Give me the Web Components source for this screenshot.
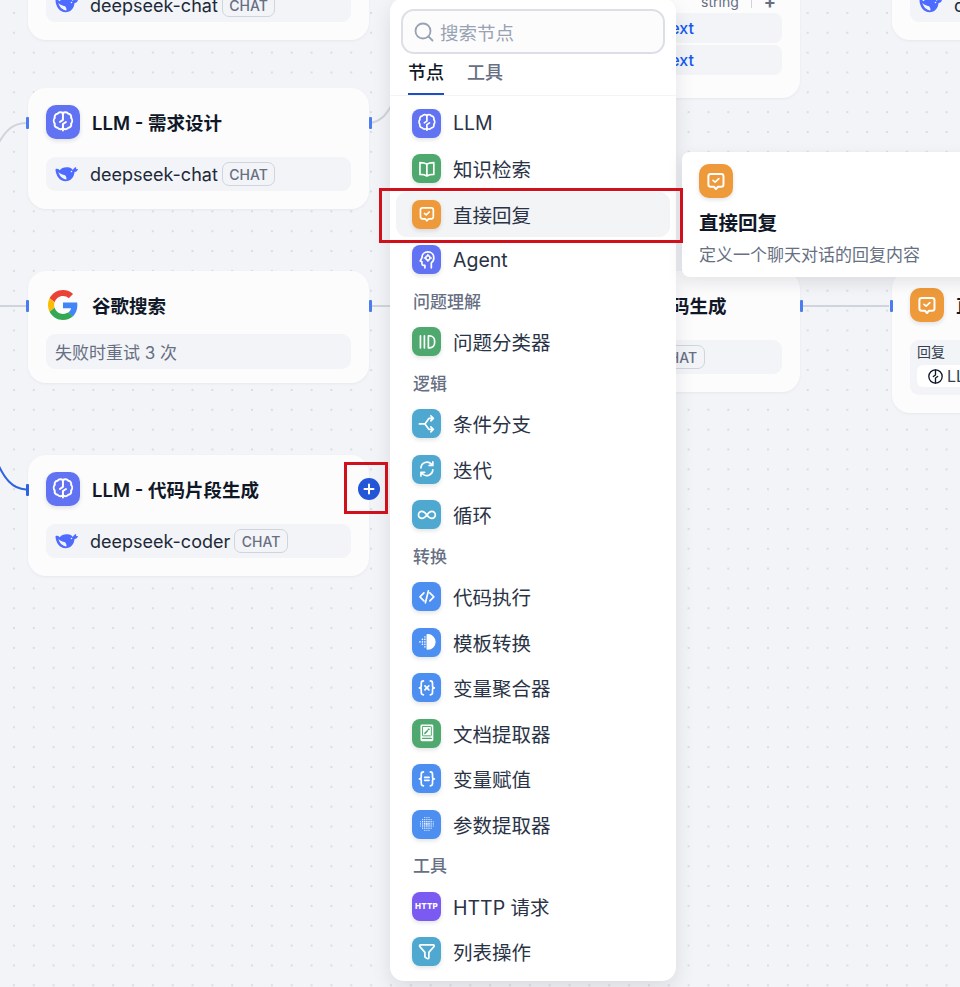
<!DOCTYPE html>
<html lang="zh">
<head>
<meta charset="utf-8">
<title>工作流</title>
<style>
    html, body { margin: 0; height: 100%; }
    body { font-family: Inter, "Noto Sans CJK SC", sans-serif; overflow: hidden; }
</style>
</head>
<body>
<flow-canvas>
    <!-- nodes that lie under the menu or run off the edge -->
    <flow-node x="28" y="-81" handles="left right">
        <node-icon slot="icon" name="llm"></node-icon>
        <span slot="title">LLM - 需求分析</span>
        <model-row name="deepseek-chat"></model-row>
    </flow-node>
    <flow-node x="892" y="-81">
        <node-icon slot="icon" name="llm"></node-icon>
        <span slot="title">LLM</span>
        <model-row name="deepseek-chat"></model-row>
    </flow-node>
    <flow-node x="459" y="-78" bottom="23">
        <node-icon slot="icon" name="llm"></node-icon>
        <span slot="title">变量聚合器</span>
        <var-head></var-head>
        <var-row>text</var-row>
        <var-row>text</var-row>
    </flow-node>

    <flow-node x="28" y="88" handles="left right">
        <node-icon slot="icon" name="llm"></node-icon>
        <span slot="title">LLM - 需求设计</span>
        <model-row name="deepseek-chat"></model-row>
    </flow-node>
    <flow-node x="28" y="271" gap="12" bottom="14" handles="left right">
        <node-icon slot="icon" name="google" plain></node-icon>
        <span slot="title">谷歌搜索</span>
        <retry-row>失败时重试 3 次</retry-row>
    </flow-node>
    <flow-node x="28" y="455" handles="active">
        <node-icon slot="icon" name="llm"></node-icon>
        <span slot="title">LLM - 代码片段生成</span>
        <model-row name="deepseek-coder"></model-row>
    </flow-node>
    <flow-node x="459" y="271" handles="right">
        <node-icon slot="icon" name="llm"></node-icon>
        <span slot="title" style="margin-left:148px">码生成</span>
        <model-row tag-only></model-row>
    </flow-node>
    <flow-node x="892" y="271" handles="left">
        <node-icon slot="icon" name="answer"></node-icon>
        <span slot="title">直接回复</span>
        <answer-row></answer-row>
    </flow-node>

    <add-button></add-button>
    <add-menu></add-menu>
    <node-tip></node-tip>
    <red-mark x="379" y="188" w="304" h="55"></red-mark>
    <red-mark x="344" y="462" w="44" h="52"></red-mark>
</flow-canvas>

<script>
// white strokes in a 24 box, one entry per node type
const paramDots = () => {
    let out = '';
    for (let r = 0; r < 7; r++) {
        for (let c = 0; c < 7; c++) {
            const dx = c - 3, dy = r - 3;
            const d = Math.hypot(dx, dy);
            if (d > 3.4) continue;
            out += `<circle cx="${12 + dx * 2.15}" cy="${12 + dy * 2.15}" r="${0.95 - d * 0.12}" fill="#fff" stroke="none"/>`;
        }
    }
    return out;
};
const templateDots = () => {
    let out = '';
    [[10, 7], [10, 9.5], [10, 12], [10, 14.5], [10, 17], [7.5, 9.5], [7.5, 12], [7.5, 14.5], [5, 12]].forEach(p => {
        out += `<circle cx="${p[0]}" cy="${p[1]}" r=".8" fill="#fff" stroke="none"/>`;
    });
    return out;
};
const ICONS = {
    llm: `<path d="M12 4.600c-1-1.200-3.600-1.200-4.600.4-1.900.2-3 2-2.400 3.500-1.200 1.300-1.200 3.700 0 5-.6 1.700.5 3.400 2.400 3.500 1 1.600 3.600 1.600 4.600.4 1 1.200 3.600 1.200 4.600-.4 1.900-.1 3-1.800 2.400-3.500 1.200-1.300 1.200-3.700 0-5 .6-1.500-.5-3.300-2.400-3.500-1-1.600-3.600-1.600-4.600-.4Z"/><path d="M12 4.600v5.600l-2.600 1.800M12 19.400v-5.600l2.600-1.800"/>`,
    book: `<path d="M12 7.200C10.500 6.200 8.500 5.600 5 5.600v12c3.500 0 5.500.6 7 1.600 1.500-1 3.500-1.600 7-1.600v-12c-3.500 0-5.500.6-7 1.600Zm0 0v12"/>`,
    answer: `<path d="M7.500 6h9a2 2 0 0 1 2 2v7a2 2 0 0 1-2 2h-2.800L12 19l-1.700-2H7.500a2 2 0 0 1-2-2V8a2 2 0 0 1 2-2Z"/><path d="M9.500 11.500l1.800 1.500 3.200-3" stroke-width="1.500"/>`,
    agent: `<path d="M10 20v-2.500H8.500A1.500 1.500 0 0 1 7 16v-2.200L5.300 13 7 10c0-3.500 2.500-6 6-6s6 2.500 6 6c0 2.500-1 4-2.500 5v5"/><circle cx="13" cy="10" r="2.100" stroke-width="1.500"/><path d="M13 6.500v1.400M13 12.100v1.400M9.500 10h1.400M15.100 10h1.400" stroke-width="1.500"/>`,
    classify: `<path d="M5.500 6v12M9.500 6v12M13.500 6h1.300a5 5 0 0 1 5 5v2a5 5 0 0 1-5 5h-1.300Z"/>`,
    branch: `<path d="M4.500 12H10l4-5.500h4.500M10 12l4 5.500h4.500M16 4l2.500 2.500L16 9M16 15l2.500 2.500L16 20"/>`,
    iterate: `<path d="M6 11a6.200 6.200 0 0 1 10.600-3.900L18 8.500M18 4.800v3.700h-3.700M18 13a6.200 6.200 0 0 1-10.600 3.900L6 15.500M6 19.200v-3.700h3.700"/>`,
    loop: `<path d="M12 12c-1.500-2-3-3.500-5-3.500a3.500 3.500 0 0 0 0 7c2 0 3.500-1.500 5-3.500Zm0 0c1.500-2 3-3.500 5-3.500a3.500 3.500 0 0 1 0 7c-2 0-3.500-1.500-5-3.500Z"/>`,
    code: `<path d="M9 8l-4 4 4 4M15 8l4 4-4 4M13.500 6l-3 12"/>`,
    template: `<path d="M12.500 5h.5a7 7 0 0 1 0 14h-.5Z" fill="#fff"/>` + templateDots(),
    aggregate: `<path d="M8.500 5C6.800 5 6.300 6 6.300 7.500V10c0 1-.5 2-1.800 2 1.300 0 1.800 1 1.800 2v2.500C6.300 18 6.800 19 8.500 19M15.500 5c1.700 0 2.200 1 2.200 2.500V10c0 1 .5 2 1.800 2-1.300 0-1.800 1-1.800 2v2.500c0 1.500-.5 2.500-2.200 2.500M10 10l4 4M14 10l-4 4"/>`,
    doc: `<rect x="5.500" y="3.500" width="13" height="17" rx="1.500" fill="#fff" stroke="none"/><rect x="7.500" y="5.500" width="9" height="9.500" rx=".6" fill="none" stroke="#4fa96f" stroke-width="1"/><path d="M10 12.500l2.500-2.500M13.500 8.500h.6" stroke="#4fa96f" stroke-width="1.600"/><path d="M7.500 17.500h9" stroke="#4fa96f" stroke-width="1.200"/>`,
    assign: `<path d="M8.500 5C6.800 5 6.300 6 6.300 7.500V10c0 1-.5 2-1.800 2 1.300 0 1.800 1 1.800 2v2.500C6.300 18 6.800 19 8.500 19M15.500 5c1.700 0 2.200 1 2.200 2.500V10c0 1 .5 2 1.800 2-1.300 0-1.800 1-1.800 2v2.500c0 1.500-.5 2.500-2.200 2.500M9.800 10.500h4.400M9.800 13.500h4.400"/>`,
    param: paramDots(),
    filter: `<path d="M5.500 5h13c.8 0 1.200.9.700 1.500L14 12.500V18c0 .7-.8 1.200-1.400.8l-2-1.200c-.4-.2-.6-.6-.6-1v-4.100L4.800 6.500C4.300 5.900 4.700 5 5.500 5Z"/>`
};
const GOOGLE = `<svg viewBox="0 0 48 48" width="30" height="30"><path fill="#EA4335" d="M24 9.500c3.540 0 6.710 1.220 9.210 3.600l6.850-6.850C35.900 2.380 30.470 0 24 0 14.620 0 6.510 5.380 2.560 13.220l7.980 6.190C12.430 13.720 17.740 9.500 24 9.500z"/><path fill="#4285F4" d="M46.980 24.550c0-1.570-.15-3.090-.38-4.550H24v9.020h12.940c-.58 2.960-2.260 5.480-4.780 7.180l7.730 6c4.510-4.180 7.090-10.360 7.090-17.650z"/><path fill="#FBBC05" d="M10.530 28.590c-.48-1.450-.76-2.990-.76-4.590s.27-3.140.76-4.590l-7.980-6.190C.92 16.460 0 20.120 0 24c0 3.880.92 7.540 2.560 10.780l7.970-6.190z"/><path fill="#34A853" d="M24 48c6.480 0 11.930-2.130 15.890-5.810l-7.730-6c-2.150 1.450-4.920 2.300-8.160 2.300-6.260 0-11.570-4.220-13.470-9.910l-7.980 6.190C6.510 42.620 14.620 48 24 48z"/></svg>`;
const WHALE = `<svg viewBox="0 0 24 16" width="23" height="16"><path fill="#4d6bfe" d="M.5 3C2 2.200 3.500 2.800 5 4 6.500 1.800 10 .5 13.500 1c2 .3 3.800 1.200 5.200 2.700.5-1.300 1.500-2.300 3.300-3 .1 1-.1 1.600.2 2.300.7-.3 1.200-.3 1.800-.2-.5 1.800-1.800 3-3.700 3.400-.3 5.200-3.900 9.300-9.300 9.300C5 15.500.8 9.800.5 3Z"/><path fill="#f2f4f7" d="M3.500 6c1.800 1.800 4.200 3 7 3.200 1.200 1.300 1.800 2.800 1.400 4.500C8 13.500 4.800 10.500 3.500 6Z"/><circle cx="17.200" cy="5.500" r=".8" fill="#f2f4f7"/></svg>`;

const COLORS = { llm: '#6172f3', book: '#4fa96f', answer: '#ee9a3a', agent: '#6172f3', classify: '#4fa96f', branch: '#4ea8cf', iterate: '#4ea8cf', loop: '#4ea8cf', code: '#4d8ff0', template: '#4d8ff0', aggregate: '#4d8ff0', doc: '#4fa96f', assign: '#4d8ff0', param: '#4d8ff0', http: '#7a5af0', filter: '#4ea8cf' };

class NodeIcon extends HTMLElement {
    constructor() {
        super()
        this.shadow = this.attachShadow({ mode: 'open' })
    }

    connectedCallback() {
        this.render()
    }

    render() {
        const name = this.getAttribute('name');
        const size = Number(this.getAttribute('size') || 34);
        let inner = `<svg viewBox="0 0 24 24" width="${size * 0.82}" height="${size * 0.82}" fill="none" stroke="#fff" stroke-width="1.7" stroke-linecap="round" stroke-linejoin="round">${ICONS[name]}</svg>`;
        if (name === 'google') inner = GOOGLE;
        if (name === 'http') inner = '<span class="http">HTTP</span>';
        const plain = this.hasAttribute('plain');
        this.shadow.innerHTML = /*html*/`
            <style>
                :host{
                    display:flex;
                    align-items:center;
                    justify-content:center;
                    flex:none;
                    width:${size}px;
                    height:${size}px;
                    border-radius:${size > 30 ? 10 : 8}px;
                    background:${plain ? 'transparent' : COLORS[name]};
                    box-shadow:${plain ? 'none' : '0 2px 4px rgba(16,24,40,.12)'};
                }
                .http{
                    color:#fff;
                    font:800 8px/1 Inter, sans-serif;
                    letter-spacing:.2px;
                }
            </style>
            ${inner}
        `
    }
}

class FlowCanvas extends HTMLElement {
    constructor() {
        super()
        this.shadow = this.attachShadow({ mode: 'open' })
    }

    connectedCallback() {
        this.shadow.innerHTML = /*html*/`
            <style>
                :host{
                    display:block;
                    position:relative;
                    width:960px;
                    height:987px;
                    overflow:hidden;
                    background-color:#f2f4f7;
                    background-image:radial-gradient(circle, #d9dde4 1px, transparent 1.4px);
                    background-size:19.85px 19.85px;
                    background-position:4px 3px;
                }
                svg{
                    position:absolute;
                    left:0;
                    top:0;
                }
            </style>
            <svg width="960" height="987" fill="none" stroke="#d0d5dd" stroke-width="2">
                <path d="M-4 148C4 132 12 123 26 123"/>
                <path d="M371 123C380 121 386 116 392 104"/>
                <path d="M0 306H26M371 306H392M802 306H889"/>
                <path d="M-3 462C4 478 12 489 26 489.5" stroke="#2f62e0"/>
            </svg>
            <slot></slot>
        `
    }
}

class FlowNode extends HTMLElement {
    constructor() {
        super()
        this.shadow = this.attachShadow({ mode: 'open' })
    }

    connectedCallback() {
        this.render()
    }

    render() {
        const handles = (this.getAttribute('handles') || '').split(' ');
        const gap = this.getAttribute('gap') || 18;
        const bottom = this.getAttribute('bottom') || 18;
        this.shadow.innerHTML = /*html*/`
            <style>
                :host{
                    display:block;
                    position:absolute;
                    left:${this.getAttribute('x')}px;
                    top:${this.getAttribute('y')}px;
                    box-sizing:border-box;
                    width:341px;
                    padding:17px 18px ${bottom}px;
                    background:#fcfcfd;
                    border-radius:18px;
                    box-shadow:0 1px 3px rgba(16,24,40,.05);
                }
                .head{
                    display:flex;
                    align-items:center;
                    gap:12px;
                    margin-bottom:${gap}px;
                    color:#101828;
                    font-size:18.5px;
                    font-weight:600;
                    white-space:nowrap;
                }
                .body{
                    display:flex;
                    flex-direction:column;
                    gap:1.5px;
                }
                .handle{
                    position:absolute;
                    top:29px;
                    width:3px;
                    height:12px;
                    background:#4d7cf0;
                    border-radius:1px;
                }
                .left{ left:-2.5px; }
                .right{ right:-2.5px; }
                .active{ left:-2.5px; background:#2f62e0; }
            </style>
            ${handles.filter(h => h).map(h => `<i class="handle ${h}"></i>`).join('')}
            <div class="head"><slot name="icon"></slot><slot name="title"></slot></div>
            <div class="body"><slot></slot></div>
        `
    }
}

class ModelRow extends HTMLElement {
    constructor() {
        super()
        this.shadow = this.attachShadow({ mode: 'open' })
    }

    connectedCallback() {
        // the part under the menu is left out, only the end of the tag shows
        const tagOnly = this.hasAttribute('tag-only');
        this.shadow.innerHTML = /*html*/`
            <style>
                :host{
                    display:flex;
                    align-items:center;
                    height:34px;
                    padding-left:${tagOnly ? 170 : 9}px;
                    background:#f2f4f7;
                    border-radius:9px;
                    color:#1d2939;
                    font-size:18px;
                    white-space:nowrap;
                }
                svg{
                    flex:none;
                    margin-right:12px;
                }
                .tag{
                    display:flex;
                    align-items:center;
                    box-sizing:border-box;
                    height:24px;
                    margin-left:4px;
                    padding:0 6.5px;
                    border:1.5px solid #d0d5dd;
                    border-radius:7px;
                    color:#676f83;
                    font-size:14px;
                    font-weight:500;
                }
            </style>
            ${tagOnly ? '' : `${WHALE}<span>${this.getAttribute('name')}</span>`}<span class="tag">CHAT</span>
        `
    }
}

class RetryRow extends HTMLElement {
    constructor() {
        super()
        this.shadow = this.attachShadow({ mode: 'open' })
    }

    connectedCallback() {
        this.shadow.innerHTML = /*html*/`
            <style>
                :host{
                    display:flex;
                    align-items:center;
                    height:35px;
                    padding-left:9px;
                    background:#f2f4f7;
                    border-radius:9px;
                    color:#676f83;
                    font-size:17px;
                }
            </style>
            <slot></slot>
        `
    }
}

class VarHead extends HTMLElement {
    constructor() {
        super()
        this.shadow = this.attachShadow({ mode: 'open' })
    }

    connectedCallback() {
        this.shadow.innerHTML = /*html*/`
            <style>
                :host{
                    display:flex;
                    align-items:center;
                    justify-content:flex-end;
                    gap:12px;
                    height:20px;
                    padding-right:6px;
                    color:#676f83;
                    font-size:14px;
                }
                i{
                    width:1px;
                    height:14px;
                    background:#d0d5dd;
                }
                b{
                    color:#676f83;
                    font-size:18px;
                }
            </style>
            <span>string</span><i></i><b>+</b>
        `
    }
}

class VarRow extends HTMLElement {
    constructor() {
        super()
        this.shadow = this.attachShadow({ mode: 'open' })
    }

    connectedCallback() {
        this.shadow.innerHTML = /*html*/`
            <style>
                :host{
                    display:flex;
                    align-items:center;
                    justify-content:flex-end;
                    height:30.5px;
                    padding-right:88px;
                    background:#f2f4f7;
                    border-radius:8px;
                    color:#155aef;
                    font-size:16px;
                    font-weight:500;
                }
            </style>
            <slot></slot>
        `
    }
}

class AnswerRow extends HTMLElement {
    constructor() {
        super()
        this.shadow = this.attachShadow({ mode: 'open' })
    }

    connectedCallback() {
        this.shadow.innerHTML = /*html*/`
            <style>
                :host{
                    display:block;
                    box-sizing:border-box;
                    width:200px;
                    height:55px;
                    padding:2px 7px;
                    background:#f2f4f7;
                    border-radius:9px;
                    color:#354052;
                    font-size:14px;
                }
                .label{
                    line-height:20px;
                    margin-bottom:3px;
                }
                .chip{
                    display:flex;
                    align-items:center;
                    gap:4px;
                    height:22px;
                    padding-left:11px;
                    background:#fff;
                    border-radius:6px;
                    font-size:16px;
                    color:#354052;
                }
                svg{
                    flex:none;
                }
            </style>
            <div class="label">回复</div>
            <div class="chip">
                <svg viewBox="3 3 18 18" width="15" height="15" fill="none" stroke="#101828" stroke-width="1.6" stroke-linecap="round" stroke-linejoin="round"><circle cx="12" cy="12" r="8"/><path d="M12 4v6.200l-2.600 1.800M12 20v-6.200l2.600-1.800"/></svg>
                <span>LLM</span>
            </div>
        `
    }
}

class AddButton extends HTMLElement {
    constructor() {
        super()
        this.shadow = this.attachShadow({ mode: 'open' })
    }

    connectedCallback() {
        this.shadow.innerHTML = /*html*/`
            <style>
                :host{
                    display:flex;
                    align-items:center;
                    justify-content:center;
                    position:absolute;
                    left:358px;
                    top:478px;
                    width:22px;
                    height:22px;
                    border-radius:50%;
                    background:#2456d8;
                }
            </style>
            <svg width="12" height="12" viewBox="0 0 12 12" fill="none" stroke="#fff" stroke-width="2" stroke-linecap="round"><path d="M6 1.500v9M1.500 6h9"/></svg>
        `
    }
}

class AddMenu extends HTMLElement {
    constructor() {
        super()
        this.shadow = this.attachShadow({ mode: 'open' })
    }

    connectedCallback() {
        this.shadow.innerHTML = /*html*/`
            <style>
                :host{
                    display:block;
                    position:absolute;
                    left:390px;
                    top:-2px;
                    box-sizing:border-box;
                    width:286px;
                    height:983px;
                    background:#fff;
                    border-radius:14px;
                    box-shadow:0 8px 20px rgba(16,24,40,.10);
                }
                .search{
                    display:flex;
                    align-items:center;
                    gap:5px;
                    box-sizing:border-box;
                    height:45px;
                    margin:11px 11px 0;
                    padding-left:10px;
                    background:#fcfcfd;
                    border:2px solid #dcdfe6;
                    border-radius:13px;
                    color:#98a2b2;
                    font-size:18.5px;
                }
                .tabs{
                    display:flex;
                    gap:23px;
                    height:41px;
                    padding:0 18px;
                    border-bottom:1px solid #f2f4f7;
                    color:#676f83;
                    font-size:18px;
                    font-weight:500;
                }
                .tab{
                    box-sizing:border-box;
                    height:41px;
                    padding-top:7px;
                    line-height:24px;
                }
                .tab.on{
                    color:#101828;
                    border-bottom:2px solid #1c4fc4;
                }
                .list{
                    display:flex;
                    flex-direction:column;
                    padding:4.5px 6px 0;
                }
            </style>
            <div class="search">
                <svg width="22" height="22" viewBox="0 0 22 22" fill="none" stroke="#98a2b2" stroke-width="1.8" stroke-linecap="round"><circle cx="10" cy="10" r="7.500"/><path d="M15.500 15.500l4 4"/></svg>
                <span>搜索节点</span>
            </div>
            <div class="tabs"><div class="tab on">节点</div><div class="tab">工具</div></div>
            <div class="list">
                <menu-item icon="llm">LLM</menu-item>
                <menu-item icon="book">知识检索</menu-item>
                <menu-item icon="answer" selected>直接回复</menu-item>
                <menu-item icon="agent">Agent</menu-item>
                <menu-head>问题理解</menu-head>
                <menu-item icon="classify">问题分类器</menu-item>
                <menu-head>逻辑</menu-head>
                <menu-item icon="branch">条件分支</menu-item>
                <menu-item icon="iterate">迭代</menu-item>
                <menu-item icon="loop">循环</menu-item>
                <menu-head>转换</menu-head>
                <menu-item icon="code">代码执行</menu-item>
                <menu-item icon="template">模板转换</menu-item>
                <menu-item icon="aggregate">变量聚合器</menu-item>
                <menu-item icon="doc">文档提取器</menu-item>
                <menu-item icon="assign">变量赋值</menu-item>
                <menu-item icon="param">参数提取器</menu-item>
                <menu-head>工具</menu-head>
                <menu-item icon="http">HTTP 请求</menu-item>
                <menu-item icon="filter">列表操作</menu-item>
            </div>
        `
    }
}

class MenuItem extends HTMLElement {
    constructor() {
        super()
        this.shadow = this.attachShadow({ mode: 'open' })
    }

    connectedCallback() {
        const selected = this.hasAttribute('selected');
        this.shadow.innerHTML = /*html*/`
            <style>
                :host{
                    display:flex;
                    align-items:center;
                    gap:12px;
                    box-sizing:border-box;
                    height:45.5px;
                    padding-left:16px;
                    border-radius:11px;
                    background:${selected ? '#f3f4f6' : 'transparent'};
                    color:#2a3345;
                    font-size:19.5px;
                }
            </style>
            <node-icon name="${this.getAttribute('icon')}" size="29"></node-icon>
            <slot></slot>
        `
    }
}

class MenuHead extends HTMLElement {
    constructor() {
        super()
        this.shadow = this.attachShadow({ mode: 'open' })
    }

    connectedCallback() {
        this.shadow.innerHTML = /*html*/`
            <style>
                :host{
                    display:flex;
                    align-items:center;
                    height:35.5px;
                    padding:0 0 1px 17px;
                    color:#676f83;
                    font-size:17px;
                    font-weight:500;
                }
            </style>
            <slot></slot>
        `
    }
}

class NodeTip extends HTMLElement {
    constructor() {
        super()
        this.shadow = this.attachShadow({ mode: 'open' })
    }

    connectedCallback() {
        this.shadow.innerHTML = /*html*/`
            <style>
                :host{
                    display:block;
                    position:absolute;
                    left:682px;
                    top:152px;
                    box-sizing:border-box;
                    width:300px;
                    height:125px;
                    padding:12px 17px 0;
                    background:#fff;
                    border-radius:8px;
                    box-shadow:0 6px 16px rgba(16,24,40,.10);
                }
                .title{
                    margin-top:12px;
                    color:#101828;
                    font-size:19.5px;
                    font-weight:600;
                    line-height:26px;
                }
                .desc{
                    margin-top:8px;
                    color:#676f83;
                    font-size:17px;
                    line-height:22px;
                    white-space:nowrap;
                }
            </style>
            <node-icon name="answer"></node-icon>
            <div class="title">直接回复</div>
            <div class="desc">定义一个聊天对话的回复内容</div>
        `
    }
}

class RedMark extends HTMLElement {
    constructor() {
        super()
        this.shadow = this.attachShadow({ mode: 'open' })
    }

    connectedCallback() {
        this.shadow.innerHTML = /*html*/`
            <style>
                :host{
                    display:block;
                    position:absolute;
                    left:${this.getAttribute('x')}px;
                    top:${this.getAttribute('y')}px;
                    box-sizing:border-box;
                    width:${this.getAttribute('w')}px;
                    height:${this.getAttribute('h')}px;
                    border:3px solid #d0101a;
                    pointer-events:none;
                }
            </style>
        `
    }
}

customElements.define('node-icon', NodeIcon);
customElements.define('flow-canvas', FlowCanvas);
customElements.define('flow-node', FlowNode);
customElements.define('model-row', ModelRow);
customElements.define('retry-row', RetryRow);
customElements.define('var-head', VarHead);
customElements.define('var-row', VarRow);
customElements.define('answer-row', AnswerRow);
customElements.define('add-button', AddButton);
customElements.define('add-menu', AddMenu);
customElements.define('menu-item', MenuItem);
customElements.define('menu-head', MenuHead);
customElements.define('node-tip', NodeTip);
customElements.define('red-mark', RedMark);
</script>
</body>
</html>
